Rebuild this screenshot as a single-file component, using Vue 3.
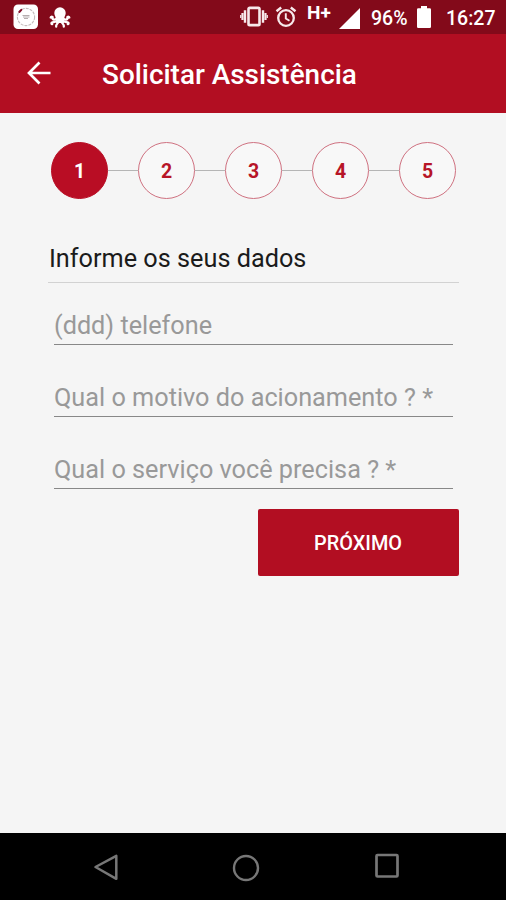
<script setup>
const steps = [1, 2, 3, 4, 5]
const fields = [
  { label: '(ddd) telefone', cls: 'phone' },
  { label: 'Qual o motivo do acionamento ? *', cls: 'reason' },
  { label: 'Qual o serviço você precisa ? *', cls: 'service' },
]
</script>

<template>
  <div class="screen">
    <header class="status">
      <svg class="app-icon" width="26" height="26" viewBox="0 0 26 26">
        <rect x="0.5" y="0.5" width="24.5" height="24.5" rx="4.5" fill="#fff" />
        <circle cx="13" cy="13" r="8.6" fill="none" stroke="#c4bcbd" stroke-width="1.1" stroke-dasharray="3 1" />
        <path d="M6.300 8L8.300 5.800" stroke="#851029" stroke-width="2" stroke-linecap="round" />
        <path d="M9.500 11.500h7M10 13h6.500M11 14.500h4" stroke="#b5adae" stroke-width="1" />
      </svg>
      <svg class="octopus" width="22" height="22" viewBox="0 0 22 22">
        <path d="M5.300 6a5.700 5.800 0 0 1 11.400 0c0 2.200-1.200 3.500-1.500 5.300l-.3 4.700H7.100l-.3-4.700C6.500 9.500 5.300 8.200 5.300 6z" fill="#fff" />
        <g fill="none" stroke="#fff" stroke-width="2.300" stroke-linecap="round">
          <path d="M8 11.500C5.500 13.500 3.200 13 3.600 10.200C2.800 9.500 1.900 9.700 1.700 10.500" />
          <path d="M14 11.500C16.500 13.500 18.800 13 18.400 10.200C19.200 9.500 20.100 9.700 20.300 10.500" />
          <path d="M8.500 13.500C6.500 15.800 4 14.600 2.800 15.600C2.100 16.300 2.500 17.100 3.200 17.200" />
          <path d="M13.500 13.500C15.500 15.800 18 14.600 19.200 15.600C19.900 16.300 19.500 17.100 18.800 17.200" />
          <path d="M9.500 14C9.200 17.500 6.600 16.800 7.200 19.600" />
          <path d="M12.500 14C12.800 17.500 15.400 16.800 14.800 19.600" />
        </g>
      </svg>
      <svg class="vibrate" width="28" height="22" viewBox="0 0 28 22" fill="none" stroke="#f7e9eb">
        <rect x="8.500" y="1.900" width="11" height="17.200" rx="1.200" stroke-width="2.600" />
        <path d="M5 4.300v12.400M23 4.300v12.400" stroke-width="2.400" />
        <path d="M2.500 7v7M25.500 7v7" stroke-width="2.200" />
        <path d="M.7 9v3M27.300 9v3" stroke-width="1.200" />
      </svg>
      <svg class="alarm" width="22" height="22" viewBox="0 0 22 22" fill="none" stroke="#f7e9eb">
        <circle cx="11" cy="12" r="7.800" stroke-width="2.300" />
        <path d="M1.500 5.300L6.200 1.500M15.800 1.500L20.500 5.300" stroke-width="2.400" />
        <path d="M10.800 7.300v5.200l3.700 2.300" stroke-width="1.900" />
      </svg>
      <span class="network">H+</span>
      <svg class="signal" width="21" height="21" viewBox="0 0 21 21"><path d="M0 21L21 0V21z" fill="#fff" /></svg>
      <span class="percent">96%</span>
      <svg class="battery" width="14" height="22" viewBox="0 0 14 22"><path d="M4 0h6v2.200h2.700a1.300 1.300 0 0 1 1.300 1.300v17.200a1.300 1.300 0 0 1-1.300 1.300H1.300A1.300 1.300 0 0 1 0 20.700V3.500a1.300 1.300 0 0 1 1.300-1.300H4z" fill="#fff" /></svg>
      <span class="clock">16:27</span>
    </header>

    <div class="appbar">
      <svg class="back" width="24" height="24" viewBox="0 0 24 24" fill="none" stroke="#fff" stroke-width="2.700">
        <path d="M23.500 12H2M12.500 1.500L2 12l10.500 10.500" />
      </svg>
      <h1>Solicitar Assistência</h1>
    </div>

    <main>
      <div class="stepper">
        <template v-for="n in steps" :key="n">
          <i v-if="n > 1" class="link"></i>
          <span class="step" :class="{ active: n === 1 }">{{ n }}</span>
        </template>
      </div>
      <h2><span>Informe os seus dados</span></h2>
      <div v-for="f in fields" :key="f.cls" class="field"><span :class="f.cls">{{ f.label }}</span></div>
      <button type="button"><span>PRÓXIMO</span></button>
    </main>

    <nav>
      <svg width="26" height="28" viewBox="0 0 26 28"><path d="M2.500 14L23.300 2.800V25.800z" fill="none" stroke="#777" stroke-width="2.500" stroke-linejoin="round" /></svg>
      <svg class="home" width="28" height="28" viewBox="0 0 28 28"><circle cx="14" cy="14" r="12" fill="none" stroke="#777" stroke-width="2.400" /></svg>
      <svg width="26" height="26" viewBox="0 0 26 26"><rect x="2.500" y="2" width="21" height="21.500" rx="1" fill="none" stroke="#777" stroke-width="2.700" /></svg>
    </nav>
  </div>
</template>

<style>
body { margin: 0; background: #f5f5f5; }
</style>

<style scoped>
.screen {
  width: 506px;
  height: 900px;
  display: flex;
  flex-direction: column;
  overflow: hidden;
  background: #f5f5f5;
  font-family: Roboto, "Liberation Sans", sans-serif;
}
svg { display: block; flex: none; }
span { white-space: nowrap; }
.status {
  height: 34px;
  flex: none;
  box-sizing: border-box;
  display: flex;
  align-items: flex-start;
  padding-left: 13px;
  background: #830a1a;
  color: #fff;
}
.app-icon { margin-top: 4px; }
.octopus { margin: 7px 0 0 10px; }
.vibrate { margin: 6px 0 0 169px; }
.alarm { margin: 6px 0 0 7px; }
.network { width: 25px; margin: 3px 0 0 10px; font-size: 19px; line-height: 20px; font-weight: 700; }
.signal { margin: 8px 0 0 7px; }
.percent { width: 37px; margin: 7px 0 0 11px; font-size: 19.500px; line-height: 24px; font-weight: 500; }
.battery { margin: 6px 0 0 9px; }
.clock { margin: 7px 0 0 15px; font-size: 19.500px; line-height: 24px; font-weight: 500; }
.appbar {
  height: 79px;
  flex: none;
  display: flex;
  align-items: center;
  padding-left: 27px;
  background: #b20e22;
  color: #fff;
}
.back { margin-top: -1px; }
h1 { margin: 2px 0 0 51px; font-size: 27.900px; line-height: 36px; font-weight: 500; white-space: nowrap; }
main { flex: 1; display: flex; flex-direction: column; padding: 29px 47px 0 48px; }
.stepper { height: 57px; display: flex; align-items: center; padding: 0 3px; }
.step {
  width: 57px;
  height: 57px;
  flex: none;
  box-sizing: border-box;
  display: flex;
  align-items: center;
  justify-content: center;
  border: 1px solid #cf7180;
  border-radius: 50%;
  background: #f8f8f8;
  color: #b71527;
  font-size: 19.500px;
  line-height: 24px;
  font-weight: 700;
  padding-top: 3px;
}
.step.active { background: #b90d24; border-color: #b90d24; color: #fff; }
.link { flex: 1; height: 1px; background: #b5b5b5; margin-top: -1px; }
h2 {
  height: 84px;
  box-sizing: border-box;
  margin: 0;
  padding: 44px 0 0 1px;
  border-bottom: 1px solid #d2d2d2;
  color: #1b1b1b;
  font-size: 25.250px;
  line-height: 32px;
  font-weight: 400;
}
.field {
  height: 72px;
  box-sizing: border-box;
  margin: 0 6px;
  padding-top: 37px;
  border-bottom: 1px solid #888;
  color: #999;
  font-size: 25.250px;
  line-height: 32px;
}
h2 + .field { height: 62px; padding-top: 27px; }
button {
  width: 201px;
  height: 67px;
  margin: 20px 0 0;
  padding: 3px 1px 0 0;
  align-self: flex-end;
  border: 0;
  border-radius: 2px;
  background: #b20e22;
  color: #fff;
  font: 500 19.900px/24px Roboto, "Liberation Sans", sans-serif;
}
nav {
  height: 67px;
  flex: none;
  box-sizing: border-box;
  display: flex;
  align-items: flex-start;
  padding: 20px 106px 0 93px;
  justify-content: space-between;
  background: #000;
}
.home { margin: 1px 1px 0 -1px; }
</style>
